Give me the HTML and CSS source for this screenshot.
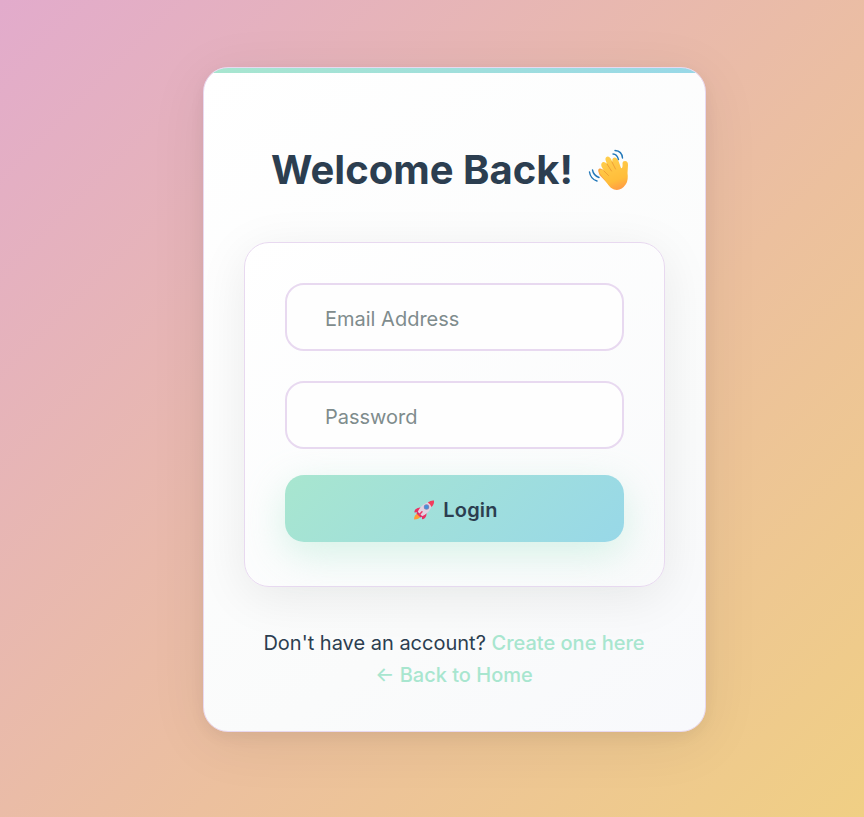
FILE: index.html
```html
<!DOCTYPE html>
<html lang="en">
<head>
<meta charset="utf-8">
<title>Login</title>
<link rel="stylesheet" href="styles.css">
</head>
<body>
<main class="card">
  <h1 class="title"><span>Welcome Back!</span>
    <svg class="wave" viewBox="0 0 70 60" aria-hidden="true">
      <defs>
        <linearGradient id="skin" gradientUnits="userSpaceOnUse" x1="30" y1="18" x2="42" y2="51"><stop offset="0" stop-color="#ffce4d"/><stop offset=".7" stop-color="#ffbd3a"/><stop offset="1" stop-color="#ff9a45"/></linearGradient>
      </defs>
      <path d="M23.500 32Q22.500 29.500 24.500 28.500Q26.500 28 28.500 30L34 36L41 43L44 48Q38 50 34 45L24.500 35Z" fill="#f9a445"/>
      <path d="M25 33.500Q23.500 30.500 26 29.500Q27.500 29 29 31L26.500 26.500Q25.500 23 28 22Q30 21.500 32 24L30.500 20Q30 17 32.500 16.500Q35 16.500 36.500 20L37.500 22Q36.500 18 39.500 17.500Q42 17.500 43.500 21L46 28Q48 29 47.500 23Q47.500 21 50 21Q53 21 53 25L52.500 33Q53.500 40 51 44Q46 51.500 39 49.500Q35 48 32 43Z" fill="url(#skin)"/>
      <path d="M29 31L33.500 35.500M32 24L36.500 31M37 22L40.500 29" fill="none" stroke="#efa036" stroke-width="1" stroke-linecap="round"/>
      <path d="M38 14Q42 14 43.500 19.500M40 10.500Q47 11 47.500 18M17.500 30Q18.500 35.500 24 37.500M14.500 32Q15.500 39 22 41" fill="none" stroke="#2378b9" stroke-width="1.400" stroke-linecap="round"/>
    </svg>
  </h1>
  <form class="form">
    <input class="field" type="email" placeholder="Email Address">
    <input class="field" type="password" placeholder="Password">
    <button class="submit" type="button">
      <svg class="rocket" viewBox="0 0 22 22" aria-hidden="true">
        <path d="M1 20.500Q1 16 4.500 14.500L7.500 17.500Q6 20.500 1 20.500Z" fill="#ff9b35"/>
        <path d="M2 11Q4 8 8 8.500L6 13L1.500 13.500Q1.200 12.300 2 11ZM9 15.500L13.500 13Q14 16.500 12 19Q10.500 20.500 9 20Z" fill="#e93062"/>
        <path d="M4.500 13.500Q8 4.500 17 3Q20 4 19 6.500Q16.500 14 8.500 17.500Z" fill="#e2d3e2"/>
        <path d="M14.800 3.500Q18 1 21 1.500Q21.500 5 18.500 8Q17.500 5 14.800 3.500Z" fill="#f23d5c"/>
        <path d="M4.500 12.500L9.500 17.500L7.500 18.500L3.500 14.500Z" fill="#d92e69"/>
        <circle cx="13.500" cy="8" r="2.700" fill="#8a86b0"/><circle cx="13.500" cy="8" r="2" fill="#438fdb"/>
        <path d="M6.500 15.500L9 12.800" stroke="#ef3764" stroke-width="1.500" stroke-linecap="round"/>
      </svg>
      <span>Login</span>
    </button>
  </form>
  <p class="links">Don't have an account? <a href="#">Create one here</a><br><a href="#">← Back to Home</a></p>
</main>
</body>
</html>
```
FILE: styles.css
```css
* { box-sizing: border-box; }
html { height: 100%; }
body {
  margin: 0;
  height: 100%;
  overflow: hidden;
  padding: 67px 0 0 203px;
  background: linear-gradient(135deg, #e2abcc 0%, #ecc09e 60%, #f0cf84 100%);
  font-family: Inter, "Liberation Sans", sans-serif;
  font-size: 20px;
  line-height: 32px;
  color: #2c3e50;
}
.card {
  width: 503px;
  height: 665px;
  padding: 70px 40px 0;
  border: 1px solid #e8d9f0;
  border-radius: 25px;
  background:
    linear-gradient(90deg, #a8e6cf, #98d8e8) top / 100% 5px no-repeat,
    linear-gradient(145deg, #fff 0%, #fafbfb 70%, #f8f9fc 100%);
  box-shadow: 0 10px 60px rgba(0,0,0,.07), 0 5px 15px rgba(0,0,0,.05);
}
.title {
  display: flex;
  align-items: center;
  height: 64px;
  margin: 0 0 40px;
  padding-left: 27px;
  font-size: 40px;
  line-height: 64px;
  font-weight: 700;
  white-space: nowrap;
}
.wave { width: 70px; height: 60px; margin-left: 2px; }
.form {
  height: 345px;
  padding: 40px;
  border: 1px solid #e8d9f0;
  border-radius: 25px;
  background: linear-gradient(145deg, #fff, #f9fafb);
  box-shadow: 0 10px 50px rgba(0,0,0,.08);
}
.field {
  display: block;
  width: 100%;
  height: 68px;
  margin: 0 0 30px;
  padding: 4px 38px 0;
  border: 2px solid #e8d9f0;
  border-radius: 19px;
  background: #fefefe;
  font: inherit;
}
.field::placeholder { color: #7f8c8d; opacity: 1; }
.submit {
  display: flex;
  align-items: center;
  justify-content: center;
  gap: 8px;
  width: 100%;
  height: 67px;
  margin-top: -4px;
  padding: 3px 0 0 2px;
  border: 0;
  border-radius: 19px;
  background: linear-gradient(135deg, #a8e6cf, #98d8e8);
  box-shadow: 0 12px 38px rgba(168,230,207,.45);
  font: inherit;
  font-weight: 600;
  letter-spacing: .2px;
  color: #2c3e50;
}
.rocket { width: 22px; height: 22px; }
.links { margin: 40px 0 0; padding-right: 1px; text-align: center; white-space: nowrap; }
.links a { color: #a8e6cf; font-weight: 500; text-decoration: none; }
```
